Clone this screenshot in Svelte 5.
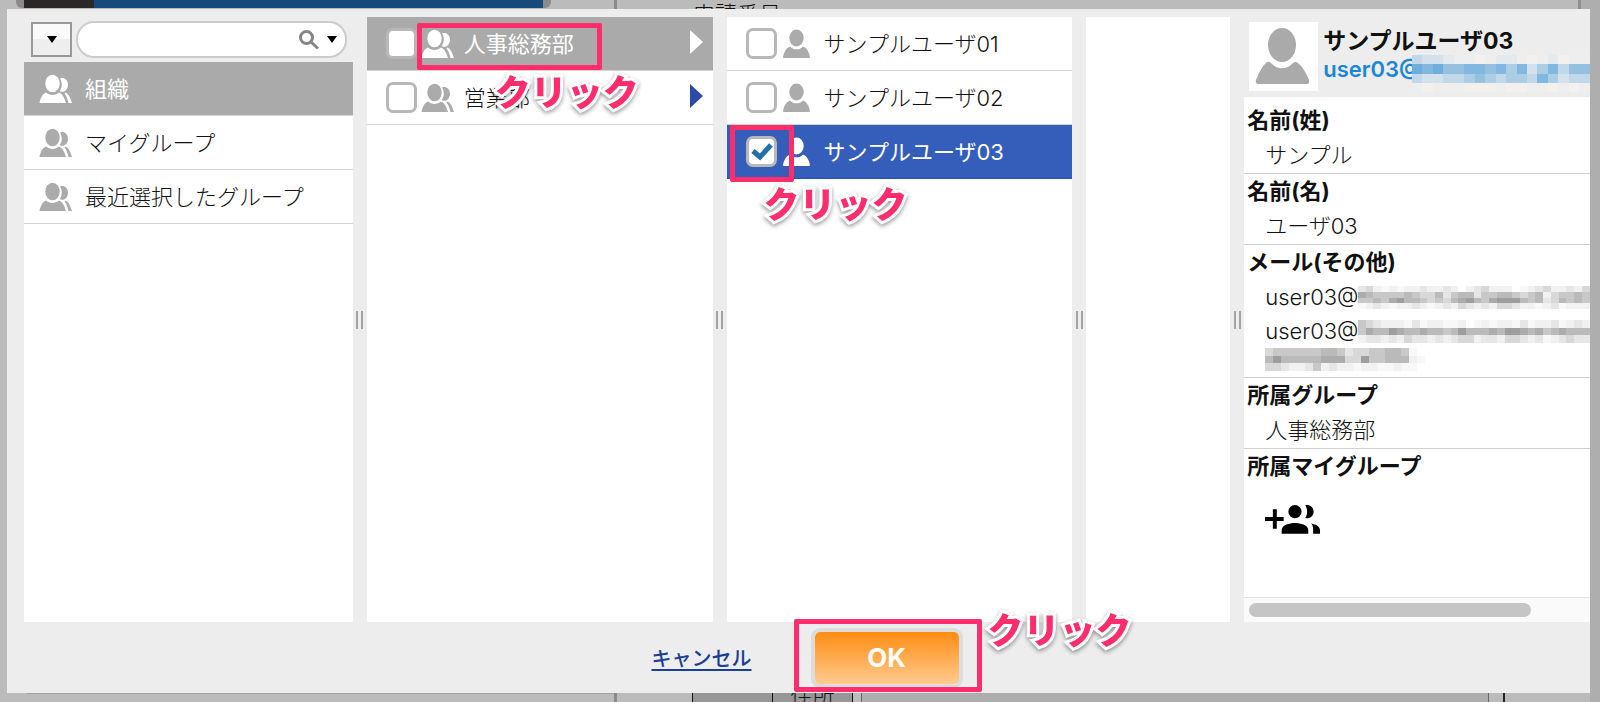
<script>
  let keyword = '';
  let activeGroup = 0;

  const groups = ['組織', 'マイグループ', '最近選択したグループ'];
  const departments = [
    { name: '人事総務部', checked: false, active: true },
    { name: '営業部', checked: false, active: false }
  ];
  const users = [
    { name: 'サンプルユーザ01', checked: false },
    { name: 'サンプルユーザ02', checked: false },
    { name: 'サンプルユーザ03', checked: true }
  ];

  // masked addresses: one character per block
  const blues = {
    a: '#6faedb', b: '#82b7e0', c: '#95c1e1', d: '#abcde5', e: '#c0d8e9',
    f: '#d2e1eb', g: '#e3eaef', h: '#f4f0ed', i: '#eeeeee'
  };
  const grays = {
    a: '#9e9e9e', b: '#acacac', c: '#bababa', d: '#c8c8c8', e: '#d8d8d8',
    f: '#e6e6e6', g: '#f1f1f1', h: '#f8f8f8', i: '#ffffff'
  };
  const headMask = ['effgiihiggihighii', 'abaccbbcbdbfdbecc', 'effeedcdeddebdfee', 'ihiiihhhihhiihihi'];
  const mailMask1 = ['feghghggfggfgigfegggihgfeggfge', 'bcddddcdeecfdccfddccdedcgeddcd', 'ddcdbaccdedecbacdbaaacdcfecdcd', 'hgfghggfghgfgefgfgeefgghgfhggg'];
  const mailMask2 = ['defggghfhgghhgihghgghfhggfhgfg', 'dbccabccbccdcacccbcaabcbdcbccc', 'gffgfgeffgfgfeegffgeefgfhgfeff'];
  const mailMask3 = ['eddddddccdfeeddccdhi', 'cacccccbbbeeaddcccgh', 'eefggfdgfgghgghhghhi'];
</script>

{#snippet people()}
  <svg class="people" viewBox="0 0 34 30" aria-hidden="true">
    <path d="M21 4.500C24.500 3 29 5.500 29 10.500c0 4-2.500 7.300-5.500 7.300-1 0-2-.3-2.700-.9 2.600-3.600 2.600-8.600.2-12.400z" />
    <path d="M26 18.500c3.800 1 5.300 5.500 7 10.500h-3.500c-.9-3.800-2-7-3.900-9.500z" />
    <ellipse cx="13.500" cy="9.500" rx="7.200" ry="8.700" />
    <path d="M7 18.500c3.500 3.200 9.500 3.200 13 0 4 1.500 5.500 6 7 10.500H.500C1.500 24.500 3 20 7 18.500z" />
  </svg>
{/snippet}

{#snippet person()}
  <svg class="person" viewBox="0 0 34 30" aria-hidden="true">
    <ellipse cx="15.500" cy="9" rx="7.200" ry="8.500" />
    <path d="M9 17.500c3.500 3.800 9.500 3.800 13 0 4 1.500 6 5.500 7 10.500q0 1-1 1H3q-1 0-1-1C3 23 5 19 9 17.500z" />
  </svg>
{/snippet}

{#snippet mask(rows, palette, cls)}
  <svg class="mask {cls}" viewBox="0 0 {rows[0].length} {rows.length}" preserveAspectRatio="none" shape-rendering="crispEdges" aria-hidden="true">
    {#each rows as row, y}
      {#each row.split('') as c, x}
        <rect {x} {y} width="1" height="1" fill={palette[c]} />
      {/each}
    {/each}
  </svg>
{/snippet}

<div class="page">
  <div class="strip top">
    <div class="banner"></div>
    <div class="rest"><span>申請番号</span></div>
  </div>

  <div class="dialog" role="dialog" aria-label="ユーザ選択">
    <div class="columns">
      <section class="groups">
        <div class="search">
          <button type="button" class="menu-btn" aria-label="メニュー"><i class="caret"></i></button>
          <div class="search-box">
            <input type="text" aria-label="検索" bind:value={keyword} />
            <svg class="glass" viewBox="0 0 20 20" aria-hidden="true">
              <circle cx="7.500" cy="7.500" r="6" />
              <path d="M12 12L19 18.500" />
            </svg>
            <i class="caret"></i>
          </div>
        </div>
        <div class="list">
          {#each groups as group, i}
            <button type="button" class="row group-row" class:active={activeGroup === i} on:click={() => (activeGroup = i)}>
              {@render people()}
              <span class="name">{group}</span>
            </button>
          {/each}
        </div>
      </section>

      <div class="handle"></div>

      <section class="list">
        {#each departments as dept, i}
          <label class="row" class:active={dept.active}>
            <input type="checkbox" bind:checked={dept.checked} />
            {@render people()}
            <span class="name">{dept.name}</span>
            <svg class="arrow" viewBox="0 0 13 24" aria-hidden="true"><path d="M0 0L13 12L0 24z" /></svg>
            {#if i === 0}
              <span class="mark mark-dept"><b>クリック</b></span>
            {/if}
          </label>
        {/each}
      </section>

      <div class="handle"></div>

      <section class="list">
        {#each users as user, i}
          <label class="row" class:selected={user.checked}>
            <input type="checkbox" bind:checked={user.checked} />
            {@render person()}
            <span class="name">{user.name}</span>
            {#if i === 2}
              <span class="mark mark-user"><b>クリック</b></span>
            {/if}
          </label>
        {/each}
      </section>

      <div class="handle"></div>

      <section class="list"></section>

      <div class="handle"></div>

      <section class="detail">
        <header>
          <div class="avatar">
            <svg viewBox="0 0 69 69" aria-hidden="true">
              <ellipse cx="33" cy="23" rx="14" ry="17" />
              <path d="M18 40Q20 39 22 41C28 48 38 48 44 41Q46 39 49 41C54 45 57 51 60 58Q61 62 57 62H10Q6 62 7 58C10 51 13 44 18 40z" />
            </svg>
          </div>
          <div class="who">
            <h2>サンプルユーザ03</h2>
            <div class="address"><a href="#mail">user03@</a>{@render mask(headMask, blues, 'wide')}</div>
          </div>
        </header>
        <dl>
          <div class="field first">
            <dt>名前(姓)</dt>
            <dd>サンプル</dd>
          </div>
          <div class="field">
            <dt>名前(名)</dt>
            <dd>ユーザ03</dd>
          </div>
          <div class="field">
            <dt>メール(その他)</dt>
            <dd class="mail">user03@{@render mask(mailMask1, grays, '')}</dd>
            <dd class="mail">user03@{@render mask(mailMask2, grays, '')}</dd>
            <dd class="mail-rest">{@render mask(mailMask3, grays, 'short')}</dd>
          </div>
          <div class="field">
            <dt>所属グループ</dt>
            <dd>人事総務部</dd>
          </div>
          <div class="field last">
            <dt>所属マイグループ</dt>
            <dd>
              <button type="button" class="add" aria-label="マイグループに追加">
                <svg viewBox="0 0 57 32" aria-hidden="true">
                  <path d="M8 5h4v8h7v4h-7v8H8v-8H0v-4h8z" />
                  <circle cx="30.500" cy="7.500" r="6.700" />
                  <path d="M17 30v-4c0-5 8-7 13.500-7S44 21 44 26v4z" />
                  <path d="M41 1c5-1 8.500 2.500 8.500 6.500S46 15 41 14c2.500-4 2.500-9 0-13z" />
                  <path d="M47 19.500c5 1 9 3 9 7V30h-7v-4c0-3-.5-5-2-6.500z" />
                </svg>
              </button>
            </dd>
          </div>
        </dl>
        <div class="scroll"><div class="thumb"></div></div>
      </section>
    </div>

    <footer>
      <a href="#cancel">キャンセル</a>
      <div class="ok-wrap">
        <button type="button" class="ok">OK</button>
        <span class="mark mark-ok"><b>クリック</b></span>
      </div>
    </footer>
  </div>

  <div class="strip bottom">
    <div class="left"></div>
    <div class="gap"></div>
    <div class="cell"></div>
    <div class="cell"><span>住所</span></div>
    <div class="gap small"></div>
    <div class="wide-cell"></div>
    <div class="gap end"></div>
  </div>
</div>

<style>
:global(body) {
  margin: 0;
  background: #bbb;
}
.page {
  display: flex;
  flex-direction: column;
  min-height: 100vh;
  overflow: hidden;
  box-sizing: border-box;
  font-family: Inter, "Noto Sans CJK JP", sans-serif;
  font-size: 22px;
  font-weight: 300;
  color: #111;
}
button, input {
  font: inherit;
  color: inherit;
}
.strip {
  display: flex;
  height: 9px;
  overflow: hidden;
  box-sizing: border-box;
}
.top {
  padding-left: 16px;
  border-right: 19px solid #aeaeae;
}
.banner {
  flex: 0 0 535px;
  box-sizing: border-box;
  height: 8px;
  border: solid #8a8a8a;
  border-width: 0 8px;
  border-radius: 0 0 6px 6px;
  background: linear-gradient(to right, #2b2727 70px, #174a7b 70px);
}
.rest {
  flex: 1;
  margin-left: 63px;
  padding-left: 76px;
  border-left: 3px solid #8a8a8a;
  border-right: 3px solid #8f8f8f;
  line-height: 28px;
}
.dialog {
  flex: 1;
  display: flex;
  flex-direction: column;
  margin-left: 7px;
  padding-left: 17px;
  background: #ededed;
  border-right: 10px solid #aeaeae;
}
.columns {
  flex: 1;
  display: grid;
  grid-template-columns: 329fr 14px 346fr 14px 346fr 14px 144fr 14px 346fr;
  padding-top: 8px;
}
.columns > * {
  min-width: 0;
}
.list {
  background: #fff;
}
.groups {
  display: flex;
  flex-direction: column;
}
.groups .list {
  flex: 1;
}
.search {
  display: flex;
  align-items: center;
  gap: 4px;
  height: 45px;
  padding: 0 6px 0 7px;
}
.menu-btn {
  display: flex;
  align-items: center;
  justify-content: center;
  width: 41px;
  height: 35px;
  padding: 0;
  border: 2px solid #999;
  background: linear-gradient(#fafafa 50%, #eee 50%);
}
.caret {
  border: 5px solid transparent;
  border-top: 7px solid #000;
  border-bottom: 0;
}
.search-box {
  flex: 1;
  display: flex;
  align-items: center;
  gap: 8px;
  min-width: 0;
  height: 37px;
  box-sizing: border-box;
  padding: 0 8px 0 16px;
  border: 2px solid #ccc;
  border-radius: 18px;
  background: #fff;
}
.search-box input {
  flex: 1;
  min-width: 0;
  padding: 0;
  border: 0;
  outline: 0;
  background: none;
}
.glass {
  width: 20px;
  height: 20px;
  fill: none;
  stroke: #858585;
  stroke-width: 3;
}
.row {
  position: relative;
  display: flex;
  align-items: center;
  gap: 9px;
  width: 100%;
  height: 54px;
  box-sizing: border-box;
  padding: 0 10px 0 19px;
  border: 0;
  border-bottom: 1px solid #d4d4d4;
  background: #fff;
  text-align: left;
  white-space: nowrap;
  cursor: pointer;
}
.group-row {
  padding-left: 15px;
  gap: 12px;
}
.name {
  padding-bottom: 4px;
}
.row svg {
  fill: #ababab;
}
.row.active {
  background: #aaa;
  color: #fff;
}
.row.selected {
  background: #355dba;
  border-color: #1f4fb0;
  color: #fff;
}
.row.active svg,
.row.selected svg {
  fill: #fff;
}
.row.active .name,
.row.selected .name {
  font-weight: 400;
}
.people,
.person {
  flex: none;
  width: 34px;
  height: 30px;
}
.row input {
  appearance: none;
  flex: none;
  width: 31px;
  height: 31px;
  margin: 0 -5px 0 0;
  border: 3px solid #b8b8b8;
  border-radius: 7px;
  background: #fff;
}
.row input:checked {
  background: #fff url("data:image/svg+xml,%3Csvg xmlns='http://www.w3.org/2000/svg' viewBox='0 0 25 25'%3E%3Cpath d='M4 12L11 18L22 6' fill='none' stroke='%23236fa8' stroke-width='5'/%3E%3C/svg%3E");
}
.row .arrow {
  width: 13px;
  height: 24px;
  margin: 0 0 4px auto;
  fill: #2a4da3;
}
.handle {
  align-self: center;
  justify-self: center;
  width: 3px;
  height: 18px;
  border: solid #a3a3a3;
  border-width: 0 2px;
}
.detail {
  display: flex;
  flex-direction: column;
  overflow: hidden;
}
.detail header {
  display: flex;
  gap: 5px;
  height: 80px;
  box-sizing: border-box;
  padding: 5px 0 0 5px;
}
.avatar {
  flex: none;
  width: 69px;
  height: 69px;
  background: #fff;
}
.avatar svg {
  fill: #aaa;
}
.who {
  flex: 1;
  min-width: 0;
  padding-top: 5px;
}
.who h2 {
  margin: 0;
  font-size: 23px;
  line-height: 28px;
  white-space: nowrap;
}
.address {
  display: flex;
  height: 37px;
  line-height: 28px;
}
.address a {
  flex: none;
  width: 89px;
  color: #1b87d6;
  font-weight: 600;
  text-decoration: none;
}
.mask {
  position: relative;
  display: block;
  flex: 1;
  min-width: 0;
  height: 23px;
}
.mask.wide {
  height: 37px;
}
.mask.short {
  width: 160px;
}
dl {
  flex: 1;
  margin: 0;
  background: #fff;
}
.field {
  padding: 0 0 1px 3px;
  border-bottom: 1px solid #d0d0d0;
}
.field.first {
  padding-top: 6px;
}
.field.last {
  border: 0;
}
dt {
  font-weight: 700;
  line-height: 35px;
}
dd {
  height: 34px;
  margin: 0;
  padding-left: 18px;
  line-height: 34px;
}
.mail {
  display: flex;
  align-items: center;
}
dd.mail-rest {
  height: 28px;
}
.add {
  margin-top: 20px;
  padding: 0;
  border: 0;
  background: none;
  cursor: pointer;
}
.add svg {
  display: block;
  width: 56px;
  height: 32px;
}
.scroll {
  height: 25px;
  box-sizing: border-box;
  padding: 5px;
  border-top: 1px solid #e2e2e2;
  background: #fafafa;
}
.thumb {
  width: 84%;
  height: 14px;
  border-radius: 7px;
  background: #c5c5c5;
}
footer {
  display: flex;
  align-items: center;
  justify-content: center;
  gap: 59px;
  height: 71px;
}
footer a {
  color: #1a3f94;
  font-size: 20px;
  font-weight: 500;
  text-underline-offset: 3px;
}
.ok-wrap {
  position: relative;
}
.ok {
  display: block;
  width: 152px;
  height: 60px;
  padding: 0;
  border: 4px solid #dcdcdc;
  border-radius: 9px;
  background: linear-gradient(#ff8c11, #ffcb90) padding-box;
  color: #fff;
  font-size: 26px;
  font-weight: 700;
  cursor: pointer;
}
.mark {
  position: absolute;
  z-index: 2;
  box-sizing: border-box;
  border: 5px solid #ff2d6c;
  border-radius: 2px;
  pointer-events: none;
}
.mark b {
  position: absolute;
  color: #ff2d6c;
  font-size: 36px;
  font-weight: 900;
  line-height: 40px;
  white-space: nowrap;
  -webkit-text-stroke: 6px #fff;
  paint-order: stroke fill;
  filter: drop-shadow(0 2px 2px rgba(0, 0, 0, 0.4));
}
.mark-dept {
  top: 6px;
  left: 50px;
  width: 185px;
  height: 47px;
}
.mark-dept b {
  top: 45px;
  left: 73px;
}
.mark-user {
  top: 0;
  left: 3px;
  width: 64px;
  height: 57px;
}
.mark-user b {
  top: 55px;
  left: 29px;
}
.mark-ok {
  top: -9px;
  left: -17px;
  width: 188px;
  height: 73px;
}
.mark-ok b {
  top: -13px;
  left: 189px;
}
.bottom {
  border-right: 10px solid #aeaeae;
  color: #111;
}
.bottom .left {
  flex: 0 0 587px;
  margin-left: 27px;
  border-top: 1px solid #a2a2a2;
}
.gap {
  flex: 0 0 75px;
  border-left: 3px solid #8a8a8a;
}
.cell {
  flex: 0 0 79px;
  border-left: 1px solid #111;
  background: #979797;
  text-align: center;
}
.cell span {
  display: block;
  margin-top: -8px;
  line-height: 22px;
}
.gap.small {
  flex-basis: 8px;
  border-left: 1px solid #111;
}
.wide-cell {
  flex: 1;
  border: solid #666;
  border-width: 0 1px;
  background: #adadad;
}
.gap.end {
  flex-basis: 85px;
  margin-left: 14px;
  border-left: 2px solid #222;
}
</style>
